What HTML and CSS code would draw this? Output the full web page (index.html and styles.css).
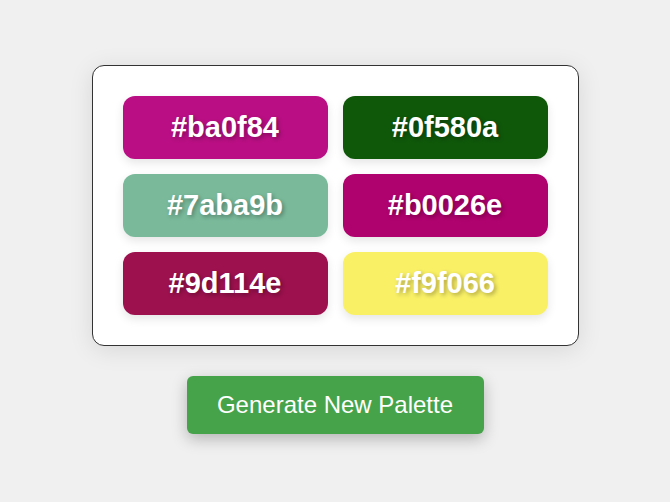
FILE: index.html
```html
<!DOCTYPE html>
<html lang="en">
<head>
<meta charset="utf-8">
<title>Palette Generator</title>
<link rel="stylesheet" href="styles.css">
</head>
<body>
<main class="app">
  <section class="palette">
    <div class="swatch" style="background:#ba0f84">#ba0f84</div>
    <div class="swatch" style="background:#0f580a">#0f580a</div>
    <div class="swatch" style="background:#7aba9b">#7aba9b</div>
    <div class="swatch" style="background:#b0026e">#b0026e</div>
    <div class="swatch" style="background:#9d114e">#9d114e</div>
    <div class="swatch" style="background:#f9f066">#f9f066</div>
  </section>
  <button class="generate">Generate New Palette</button>
</main>
</body>
</html>
```
FILE: styles.css
```css
html, body {
  margin: 0;
  padding: 0;
}
body {
  background: #f0f0f0;
  font-family: "Liberation Sans", Arial, sans-serif;
  min-height: 100vh;
  display: flex;
  align-items: center;
  justify-content: center;
}
.app {
  display: flex;
  flex-direction: column;
  align-items: center;
  gap: 30px;
  margin-top: -3px;
}
.palette {
  background: #fff;
  border: 1px solid #333;
  border-radius: 12px;
  padding: 30px;
  display: grid;
  grid-template-columns: 205px 205px;
  grid-auto-rows: 63px;
  gap: 15px;
  box-shadow: 0 4px 24px rgba(0, 0, 0, 0.1);
}
.swatch {
  border-radius: 12px;
  display: flex;
  align-items: center;
  justify-content: center;
  color: #fff;
  font-weight: bold;
  font-size: 29px;
  text-shadow: 2px 2px 4px rgba(0, 0, 0, 0.3);
  box-shadow: 0 4px 10px rgba(0, 0, 0, 0.1);
}
.generate {
  background: #46a34a;
  color: #fff;
  border: none;
  border-radius: 6px;
  font-family: "Liberation Sans", Arial, sans-serif;
  font-size: 24px;
  width: 297px;
  height: 58px;
  padding: 0;
  cursor: pointer;
  box-shadow: 0 5px 15px rgba(0, 0, 0, 0.25);
}
```
